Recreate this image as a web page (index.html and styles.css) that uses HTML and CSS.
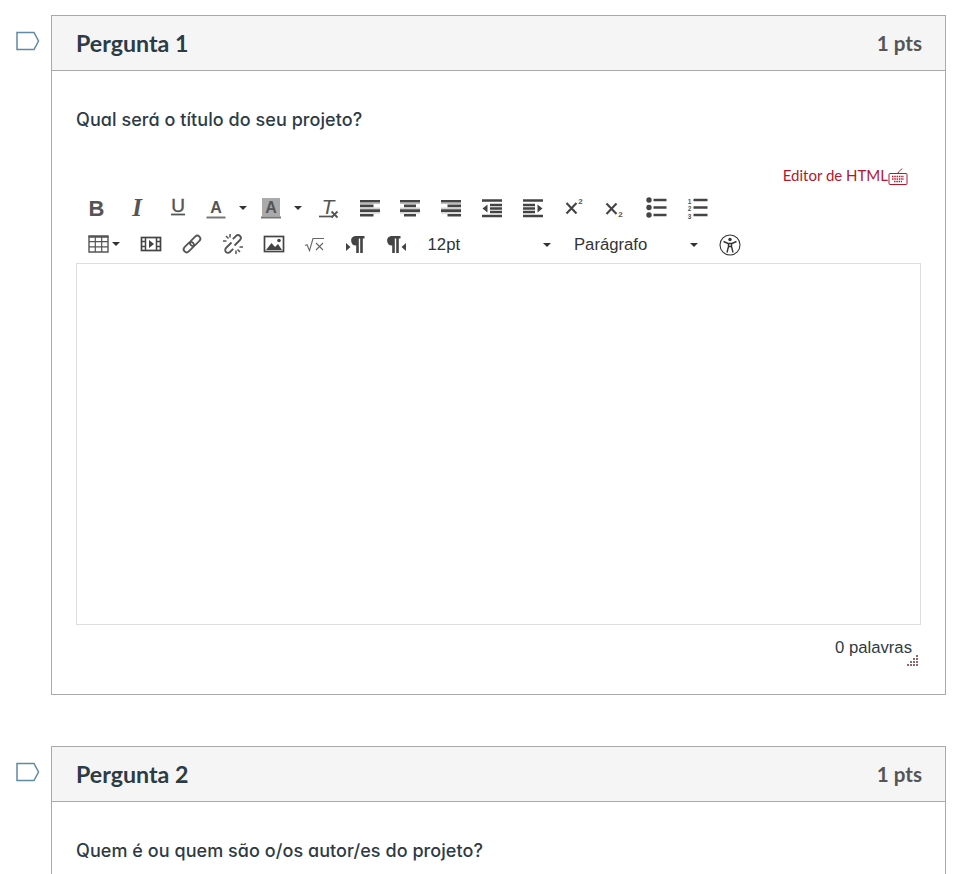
FILE: index.html
```html
<!DOCTYPE html>
<html lang="pt">
<head>
<meta charset="utf-8">
<title>Perguntas</title>
<link rel="stylesheet" href="styles.css">
</head>
<body>
<main class="quiz">
  <section class="question-row">
    <svg class="flag" width="24" height="20" viewBox="0 0 24 20"><path d="M1 1.500H18L22.500 10L18 18.500H1Z" fill="#fff" stroke="#5f8aa3" stroke-width="1.500"/></svg>
    <div class="card">
      <header class="card-head"><h2>Pergunta 1</h2><span class="pts">1 pts</span></header>
      <div class="card-body card-body-full">
        <p class="prompt">Qual será o título do seu projeto?</p>
        <div class="html-link">
          <span>Editor de HTML</span>
          <svg width="20" height="20" viewBox="0 0 20 20" fill="none" stroke="#b5162b"><rect x="1" y="7.500" width="18" height="11" rx="1"/><path d="M10 7.500C10 5 12 5.500 14 2.500"/><path d="M4 10.500h12M4 13h12M6 15.500h8" stroke-width="1.400" stroke-dasharray="1.500 .8"/></svg>
        </div>
        <div class="toolbar">
          <div class="tool-row">
            <span class="tb"><svg class="ic" viewBox="0 0 22 22"><text x="11.500" y="19" text-anchor="middle" class="g g-b">B</text></svg></span>
            <span class="tb"><svg class="ic" viewBox="0 0 22 22"><text x="11" y="19" text-anchor="middle" class="g g-i">I</text></svg></span>
            <span class="tb"><svg class="ic" viewBox="0 0 22 22"><text x="11" y="15" text-anchor="middle" class="g g-u">U</text><path d="M4 17.500h14" stroke="#555" stroke-width="1.800"/></svg></span>
            <span class="tb tb-split"><svg class="ic" viewBox="0 0 22 22"><text x="11" y="16" text-anchor="middle" class="g g-a">A</text><path d="M1.500 20.500h19" stroke="#777" stroke-width="2"/></svg><i class="caret caret-a"></i></span>
            <span class="tb tb-split tb-split2"><svg class="ic" viewBox="0 0 22 22"><rect x="2" y="1" width="18" height="18.500" fill="#aaa"/><text x="11" y="16" text-anchor="middle" class="g g-a">A</text><path d="M1 20.500h20" stroke="#777" stroke-width="2"/></svg><i class="caret caret-a"></i></span>
            <span class="tb"><svg class="ic" viewBox="0 0 22 22"><text x="10" y="17" text-anchor="middle" class="g g-i2">T</text><path d="M1 19.500h14" stroke="#555" stroke-width="1.700"/><path d="M13.500 14.500l6 6M19.500 14.500l-6 6" stroke="#555" stroke-width="1.800"/></svg></span>
            <span class="tb"><svg class="ic" viewBox="0 0 22 22"><path d="M1 4.200h20M1 8.900h13.500M1 13.600h20M1 18.300h13.500" stroke="#444" stroke-width="2.600"/><path d="M1 6.500h20M1 11.200h20M1 15.900h20" stroke="#bbb" stroke-width="1"/></svg></span>
            <span class="tb"><svg class="ic" viewBox="0 0 22 22"><path d="M1 4.200h20M5 8.900h12M1 13.600h20M5 18.300h12" stroke="#444" stroke-width="2.600"/><path d="M1 6.500h20M1 11.200h20M1 15.900h20" stroke="#bbb" stroke-width="1"/></svg></span>
            <span class="tb"><svg class="ic" viewBox="0 0 22 22"><path d="M1 4.200h20M7.500 8.900h13.500M1 13.600h20M7.500 18.300h13.500" stroke="#444" stroke-width="2.600"/><path d="M1 6.500h20M1 11.200h20M1 15.900h20" stroke="#bbb" stroke-width="1"/></svg></span>
            <span class="tb"><svg class="ic" viewBox="0 0 22 22"><path d="M1 3.500h20M9 8h12M9 11.500h12M9 15h12M1 19h20" stroke="#444" stroke-width="2.300"/><path d="M6.500 7.500v8L1.500 11.500Z" fill="#444"/></svg></span>
            <span class="tb"><svg class="ic" viewBox="0 0 22 22"><path d="M1 3.500h20M1 8h12M1 11.500h12M1 15h12M1 19h20" stroke="#444" stroke-width="2.300"/><path d="M15.500 7.500v8l5-4Z" fill="#444"/></svg></span>
            <span class="tb"><svg class="ic" viewBox="0 0 22 22"><path d="M3.500 6l10 10.500M13.500 6l-10 10.500" stroke="#444" stroke-width="2.100"/><text x="17.500" y="7" text-anchor="middle" class="g g-s">2</text></svg></span>
            <span class="tb"><svg class="ic" viewBox="0 0 22 22"><path d="M3.500 6.500l10 10.500M13.500 6.500l-10 10.500" stroke="#444" stroke-width="2.100"/><text x="17.500" y="20" text-anchor="middle" class="g g-s">2</text></svg></span>
            <span class="tb tb-ul"><svg class="ic" viewBox="0 0 22 22"><circle cx="4" cy="3" r="2.700" fill="#444"/><circle cx="4" cy="10.500" r="2.700" fill="#444"/><circle cx="4" cy="18" r="2.700" fill="#444"/><path d="M8.500 3h13M8.500 10.500h13M8.500 18h13" stroke="#444" stroke-width="2.400"/></svg></span>
            <span class="tb"><svg class="ic" viewBox="0 0 22 22"><text x="3.500" y="6.500" text-anchor="middle" class="g g-n">1</text><text x="3.500" y="14" text-anchor="middle" class="g g-n">2</text><text x="3.500" y="21.500" text-anchor="middle" class="g g-n">3</text><path d="M7.500 3h14M7.500 10.500h14M7.500 18h14" stroke="#444" stroke-width="2.400"/></svg></span>
          </div>
          <div class="tool-row">
            <span class="tb tb-table"><svg class="ic" viewBox="0 0 22 22"><path d="M2 3.500h19v15.500h-19Z" fill="none" stroke="#555" stroke-width="1.400"/><path d="M1.500 3.500h20" stroke="#555" stroke-width="2.400"/><path d="M2 8.700h19M2 13.900h19M8.300 3.500v15.500M14.700 3.500v15.500" stroke="#555" stroke-width="1.200"/></svg><i class="caret caret-t"></i></span>
            <span class="tb"><svg class="ic" viewBox="0 0 22 22"><rect x="1.500" y="4.500" width="19" height="13" fill="none" stroke="#444" stroke-width="1.700"/><path d="M5.500 4.500v13M16.500 4.500v13M1.500 8.500h4M1.500 13.500h4M16.500 8.500h4M16.500 13.500h4" stroke="#444" stroke-width="1.500"/><path d="M9 7v8l5-4Z" fill="#444"/></svg></span>
            <span class="tb"><svg class="ic" viewBox="0 0 22 22" fill="none" stroke="#555" stroke-width="1.800"><rect x="0.500" y="8" width="12" height="6" rx="3" transform="rotate(-45 11 11)"/><rect x="9.500" y="8" width="12" height="6" rx="3" transform="rotate(-45 11 11)"/></svg></span>
            <span class="tb"><svg class="ic" viewBox="0 0 22 22" fill="none" stroke="#555" stroke-width="1.800"><path d="M9.500 9.500l-5.500 5.500a2.800 2.800 0 0 0 4 4l3.200-3.200"/><path d="M12.500 12.500l5.500-5.500a2.800 2.800 0 0 0-4-4l-3.200 3.200"/><path d="M4 3l2.500 2.500M1 8h3.500M8 1v3.500M18 19l-2.500-2.500M21 14h-3.500M14 21v-3.500" stroke-width="1.500"/></svg></span>
            <span class="tb"><svg class="ic" viewBox="0 0 22 22"><rect x="1.500" y="3.500" width="19" height="15" fill="none" stroke="#444" stroke-width="1.700"/><path d="M3 17l5.500-7 3.500 4 3-3 4 6Z" fill="#444"/><circle cx="16" cy="7.500" r="1.800" fill="#444"/></svg></span>
            <span class="tb"><svg class="ic" viewBox="0 0 22 22" fill="none" stroke="#666" stroke-width="1.100"><path d="M1 12.500l2 -.8 2.500 6L9 5.500h11"/><path d="M12 10l7 7M19 10l-7 7"/></svg></span>
            <span class="tb"><svg class="ic" viewBox="0 0 22 22"><path d="M11 3h9.500v2.500h-1.700V20h-2.600V5.500h-1.400V20h-2.600v-7.500a4.800 4.800 0 0 1-1.200-9.500Z" fill="#444"/><path d="M2 10v8l4.500-4Z" fill="#444"/></svg></span>
            <span class="tb"><svg class="ic" viewBox="0 0 22 22"><path d="M6 3h9.500v2.500h-1.700V20h-2.600V5.500h-1.400V20H7.200v-7.500A4.800 4.800 0 0 1 6 3Z" fill="#444"/><path d="M21 10v8l-4.500-4Z" fill="#444"/></svg></span>
            <span class="select select-size"><span>12pt</span><i class="caret"></i></span>
            <span class="select select-format"><span>Parágrafo</span><i class="caret"></i></span>
            <svg class="a11y" width="22" height="22" viewBox="0 0 22 22" fill="none" stroke="#333"><circle cx="11" cy="11" r="10" stroke-width="1.100"/><circle cx="11" cy="5.500" r="1.700" fill="#333" stroke="none"/><path d="M4.500 7.500l4.500 2h4l4.500-2M9.500 9.500v3l-1.500 6M12.500 9.500v3l1.500 6M9.500 12.500h3" stroke-width="1.400"/></svg>
          </div>
        </div>
        <div class="edit-area"></div>
        <div class="status"><span>0 palavras</span></div>
        <svg class="grip" width="12" height="12" viewBox="0 0 12 12" fill="#8a6a6a"><path d="M10 0h2v2h-2zM10 3h2v2h-2zM7 3h2v2H7zM10 6h2v2h-2zM7 6h2v2H7zM4 6h2v2H4zM10 9h2v2h-2zM7 9h2v2H7zM4 9h2v2H4zM1 9h2v2H1z"/></svg>
      </div>
    </div>
  </section>
  <section class="question-row">
    <svg class="flag" width="24" height="20" viewBox="0 0 24 20"><path d="M1 1.500H18L22.500 10L18 18.500H1Z" fill="#fff" stroke="#5f8aa3" stroke-width="1.500"/></svg>
    <div class="card">
      <header class="card-head"><h2>Pergunta 2</h2><span class="pts">1 pts</span></header>
      <div class="card-body card-body-tail">
        <p class="prompt">Quem é ou quem são o/os autor/es do projeto?</p>
      </div>
    </div>
  </section>
</main>
</body>
</html>
```
FILE: styles.css
```css
html, body { margin: 0; height: 100%; overflow: hidden; background: #fff; }
body { font-family: "Lato", sans-serif; color: #2d3b45; }
.quiz { padding: 15px 22px 0 16px; display: flex; flex-direction: column; gap: 51px; }
.question-row { display: flex; align-items: flex-start; gap: 11px; }
.flag { flex: none; margin-top: 16px; }
.card { flex: 1; border: 1px solid #aaa; min-width: 0; }
.card-head {
  display: flex; justify-content: space-between; align-items: center;
  height: 54px; padding: 0 23px 0 24px; background: #f5f5f5; border-bottom: 1px solid #aaa;
}
.card-head h2 { margin: 0; font-size: 23.200px; font-weight: 700; color: #2d3b45; }
.pts { font-size: 20.600px; font-weight: 700; color: #555; }
.card-body { padding: 37px 24px 0; position: relative; }
.card-body-full { height: 586px; }
.card-body-tail { height: 300px; }
.prompt { margin: 0; font-family: "Inter", sans-serif; font-feature-settings: "cv11" 1; font-size: 18px; line-height: 24px; font-weight: 500; letter-spacing: .06px; color: #2d3b45; }
.html-link { display: flex; justify-content: flex-end; align-items: flex-end; height: 20px; margin-top: 34px; padding-right: 13px; color: #b5162b; font-size: 15px; }
.html-link span { line-height: 19px; margin-bottom: 1px; }
.toolbar { margin-top: 4px; }
.tool-row { display: flex; align-items: center; height: 36px; }
.tb { width: 40.800px; flex: none; display: flex; justify-content: center; align-items: center; }
.ic { width: 22px; height: 22px; display: block; overflow: visible; }
.tb-split { width: 53px; justify-content: flex-start; padding-left: 7px; box-sizing: border-box; gap: 12px; }
.tb-split2 { margin-left: 2px; margin-right: 2px; }
.tb-table { width: 55px; justify-content: flex-start; padding-left: 11px; box-sizing: border-box; gap: 3px; }
.tb-ul { margin-left: 1px; }
.caret { display: block; width: 0; height: 0; border: 4px solid transparent; border-top-color: #333; border-bottom: 0; flex: none; }
.select { display: flex; justify-content: space-between; align-items: center; font-family: "Liberation Sans", sans-serif; font-size: 16.700px; color: #333; box-sizing: border-box; flex: none; padding-top: 1px; }
.select-size { width: 134.400px; padding-left: 11px; }
.select-format { width: 125px; margin-left: 22px; padding-left: 1px; }
.a11y { margin: 1px 0 0 21px; flex: none; }
.g { fill: #555; }
.g-b { font: 700 22px "Liberation Sans", sans-serif; }
.g-i { font: italic 700 25px "Liberation Serif", serif; }
.g-u { font: 400 19px "Liberation Sans", sans-serif; stroke: #555; stroke-width: .4px; }
.g-a { font: 700 16px "Liberation Sans", sans-serif; }
.g-i2 { font: italic 400 21px "Liberation Sans", sans-serif; }
.g-s { font: 700 8px "Liberation Sans", sans-serif; }
.g-n { font: 700 6.500px "Liberation Sans", sans-serif; }
.edit-area { height: 360px; border: 1px solid #ddd; margin-top: 1px; }
.status { text-align: right; padding: 13px 9px 0 0; font-family: "Liberation Sans", sans-serif; font-size: 16.700px; line-height: 20px; color: #2d3b45; }
.grip { position: absolute; right: 27px; bottom: 27px; }
```
